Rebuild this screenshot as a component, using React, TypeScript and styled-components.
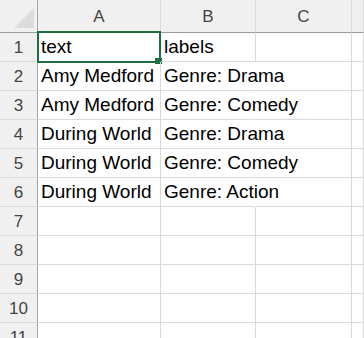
import React from "react";
import styled, { createGlobalStyle } from "styled-components";

const Global = createGlobalStyle`
  html, body { margin: 0; padding: 0; background: #fff; overflow: hidden; }
  body { font-family: "Liberation Sans", Arial, sans-serif; }
`;

const Sheet = styled.div`
  display: grid;
  grid-template-columns: 38px 123px 95px 96px 1fr;
  grid-template-rows: 33px;
  grid-auto-rows: 29px;
  width: 364px;
  height: 338px;
  overflow: hidden;
`;

const Corner = styled.div`
  background: #f0f0f0;
  border-right: 1px solid #a6a6a6;
  border-bottom: 1px solid #9b9b9b;
  box-sizing: border-box;
  display: flex;
  align-items: flex-end;
  justify-content: flex-end;
  padding: 0 3px 4px 0;
`;

const ColHead = styled.div`
  background: #f0f0f0;
  border-right: 1px solid #dadada;
  border-bottom: 1px solid #9b9b9b;
  box-sizing: border-box;
  display: flex;
  align-items: center;
  justify-content: center;
  color: #444;
  font-size: 17px;
  padding-top: 2px;
`;

const RowHead = styled.div`
  background: #f0f0f0;
  border-right: 1px solid #a6a6a6;
  border-bottom: 1px solid #dadada;
  box-sizing: border-box;
  display: flex;
  align-items: center;
  justify-content: center;
  color: #444;
  font-size: 17px;
  padding-top: 1px;
`;

const Cell = styled.div<{ $spill?: boolean; $clip?: boolean }>`
  position: relative;
  z-index: ${(p) => (p.$spill ? 1 : 0)};
  border-right: 1px solid ${(p) => (p.$spill ? "transparent" : "#d9d9d9")};
  border-bottom: 1px solid #d9d9d9;
  box-sizing: border-box;
  display: flex;
  align-items: flex-end;
  padding: 0 0 3px 3px;
  font-size: 19px;
  color: #000;
  white-space: nowrap;
  min-width: 0;
  overflow: ${(p) => (p.$clip ? "hidden" : "visible")};
`;

const Text = styled.span`
  display: block;
  line-height: 22px;
`;

const Selection = styled.div`
  position: absolute;
  left: -1px;
  top: -2px;
  width: 124px;
  height: 32px;
  border: 2px solid #1e6e42;
  box-sizing: border-box;
  pointer-events: none;
  z-index: 2;
`;

const Handle = styled.div`
  position: absolute;
  left: 117px;
  top: 25px;
  width: 7px;
  height: 6px;
  background: #1e6e42;
  z-index: 3;
`;

const rows: [string, string][] = [
  ["text", "labels"],
  ["Amy Medford", "Genre: Drama"],
  ["Amy Medford", "Genre: Comedy"],
  ["During World", "Genre: Drama"],
  ["During World", "Genre: Comedy"],
  ["During World", "Genre: Action"],
  ["", ""],
  ["", ""],
  ["", ""],
  ["", ""],
  ["", ""],
];

export default function App() {
  return (
    <>
      <Global />
      <Sheet>
        <Corner>
          <svg width="20" height="20" viewBox="0 0 20 20">
            <polygon points="0,20 20,20 20,0" fill="#dcdcdc" />
          </svg>
        </Corner>
        <ColHead>A</ColHead>
        <ColHead>B</ColHead>
        <ColHead>C</ColHead>
        <ColHead />
        {rows.map(([a, b], i) => (
          <React.Fragment key={i}>
            <RowHead>{i + 1}</RowHead>
            <Cell $clip={i !== 0}>
              <Text>{a}</Text>
              {i === 0 && (
                <>
                  <Selection />
                  <Handle />
                </>
              )}
            </Cell>
            <Cell $spill={b.length > 8}>
              <Text>{b}</Text>
            </Cell>
            <Cell />
            <Cell />
          </React.Fragment>
        ))}
      </Sheet>
    </>
  );
}
